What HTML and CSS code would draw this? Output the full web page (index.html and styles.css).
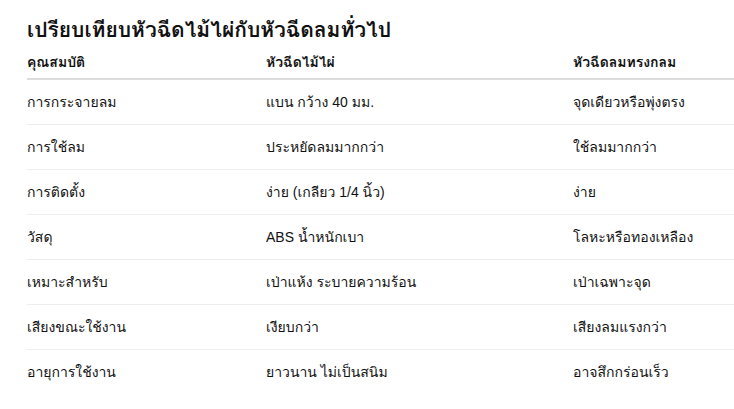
FILE: index.html
```html
<!DOCTYPE html>
<html lang="th">
<head>
<meta charset="utf-8">
<link rel="stylesheet" href="styles.css">
</head>
<body>
<section class="compare">
  <h2 class="title">เปรียบเทียบหัวฉีดไม้ไผ่กับหัวฉีดลมทั่วไป</h2>
  <table class="table">
    <thead>
      <tr><th class="c1">คุณสมบัติ</th><th class="c2">หัวฉีดไม้ไผ่</th><th class="c3">หัวฉีดลมทรงกลม</th></tr>
    </thead>
    <tbody>
      <tr><td>การกระจายลม</td><td>แบน กว้าง 40 มม.</td><td>จุดเดียวหรือพุ่งตรง</td></tr>
      <tr><td>การใช้ลม</td><td>ประหยัดลมมากกว่า</td><td>ใช้ลมมากกว่า</td></tr>
      <tr><td>การติดตั้ง</td><td>ง่าย (เกลียว 1/4 นิ้ว)</td><td>ง่าย</td></tr>
      <tr><td>วัสดุ</td><td>ABS น้ำหนักเบา</td><td>โลหะหรือทองเหลือง</td></tr>
      <tr><td>เหมาะสำหรับ</td><td>เป่าแห้ง ระบายความร้อน</td><td>เป่าเฉพาะจุด</td></tr>
      <tr><td>เสียงขณะใช้งาน</td><td>เงียบกว่า</td><td>เสียงลมแรงกว่า</td></tr>
      <tr><td>อายุการใช้งาน</td><td>ยาวนาน ไม่เป็นสนิม</td><td>อาจสึกกร่อนเร็ว</td></tr>
    </tbody>
  </table>
</section>
</body>
</html>
```
FILE: styles.css
```css
html, body {
  margin: 0;
  padding: 0;
  background: #fff;
}
body {
  font-family: "Liberation Sans", Loma, "Noto Sans Thai", sans-serif;
  color: #111;
}
.compare {
  padding: 16px 0 0 27px;
}
.title {
  margin: 0 0 8px;
  font-size: 21px;
  font-weight: 700;
  line-height: 28px;
  color: #111;
}
.table {
  width: 100%;
  border-collapse: collapse;
  font-size: 14px;
}
.table th {
  text-align: left;
  font-weight: 700;
  padding: 0 0 6px;
  border-bottom: 2px solid #ddd;
  line-height: 20px;
}
.c1 { width: 239px; }
.c2 { width: 307px; }
.table td {
  padding: 12px 0;
  line-height: 20px;
  border-bottom: 1px solid #eee;
  color: #111;
}
.table tbody tr:last-child td {
  border-bottom: none;
}
```
